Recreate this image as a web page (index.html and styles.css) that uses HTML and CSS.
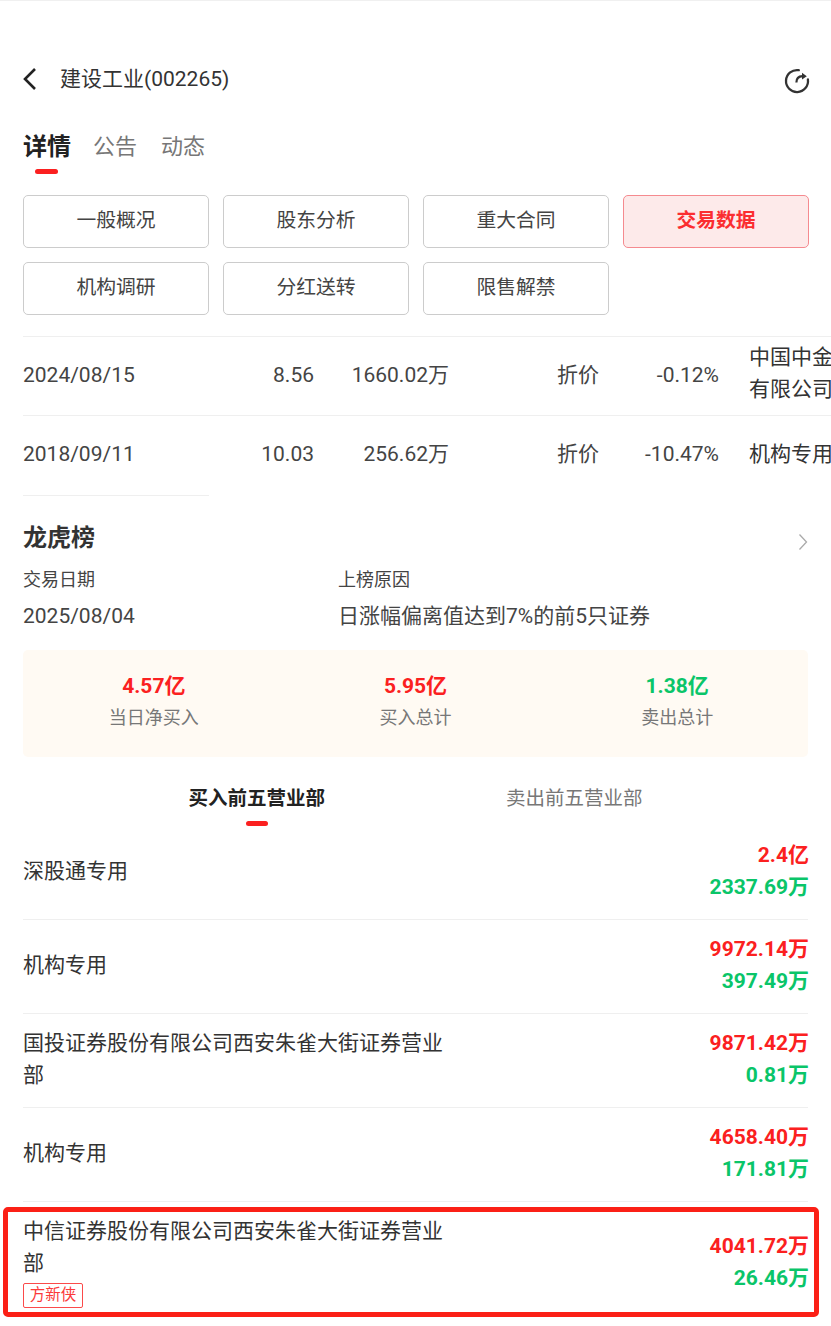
FILE: index.html
```html
<!DOCTYPE html>
<html lang="zh-CN">
<head>
    <meta charset="UTF-8">
    <meta name="viewport" content="width=device-width, initial-scale=1.0">
    <title>建设工业(002265)</title>
    <link rel="stylesheet" href="styles.css">
</head>
<body>
    <header class="nav-bar">
        <svg class="back-icon" viewBox="0 0 16 24" width="16" height="24"><path d="M13 2 L3 12 L13 22" fill="none" stroke="#222" stroke-width="2.6"/></svg>
        <div class="nav-title">建设工业(002265)</div>
        <svg class="share-icon" viewBox="0 0 26 26" width="26" height="26">
            <path d="M14.8 2.2 A11 11 0 1 0 23.9 11.5" fill="none" stroke="#333" stroke-width="2.3" stroke-linecap="round"/>
            <path d="M12.4 14.5 C12.4 10.8 14.5 8.4 18.5 8.2" fill="none" stroke="#333" stroke-width="2.2"/>
            <path d="M18 4.8 L22.8 8.2 L18 11.6 Z" fill="#333"/>
        </svg>
    </header>

    <nav class="main-tabs">
        <div class="main-tab active">详情</div>
        <div class="main-tab">公告</div>
        <div class="main-tab">动态</div>
    </nav>

    <div class="filter-grid">
        <div class="filter-btn">一般概况</div>
        <div class="filter-btn">股东分析</div>
        <div class="filter-btn">重大合同</div>
        <div class="filter-btn selected">交易数据</div>
        <div class="filter-btn">机构调研</div>
        <div class="filter-btn">分红送转</div>
        <div class="filter-btn">限售解禁</div>
    </div>

    <section class="trade-table">
        <div class="trade-row">
            <div>2024/08/15</div>
            <div class="num">8.56</div>
            <div class="num">1660.02万</div>
            <div class="num">折价</div>
            <div class="num">-0.12%</div>
            <div class="trade-name two-line">中国中金财富证券<br>有限公司北京分公司</div>
        </div>
        <div class="trade-row">
            <div>2018/09/11</div>
            <div class="num">10.03</div>
            <div class="num">256.62万</div>
            <div class="num">折价</div>
            <div class="num">-10.47%</div>
            <div class="trade-name">机构专用</div>
        </div>
        <div class="short-line"></div>
    </section>

    <section class="rank">
        <div class="rank-head">
            <h2>龙虎榜</h2>
            <svg viewBox="0 0 10 18" width="10" height="18"><path d="M1.5 1.5 L8.5 9 L1.5 16.5" fill="none" stroke="#aaa" stroke-width="1.3"/></svg>
        </div>
        <div class="rank-info">
            <div class="info-date">
                <div class="info-label">交易日期</div>
                <div class="info-value">2025/08/04</div>
            </div>
            <div>
                <div class="info-label">上榜原因</div>
                <div class="info-value">日涨幅偏离值达到7%的前5只证券</div>
            </div>
        </div>

        <div class="summary">
            <div class="summary-item">
                <div class="summary-value up">4.57亿</div>
                <div class="summary-label">当日净买入</div>
            </div>
            <div class="summary-item">
                <div class="summary-value up">5.95亿</div>
                <div class="summary-label">买入总计</div>
            </div>
            <div class="summary-item">
                <div class="summary-value down">1.38亿</div>
                <div class="summary-label">卖出总计</div>
            </div>
        </div>

        <div class="sub-tabs">
            <div class="sub-tab active">买入前五营业部</div>
            <div class="sub-tab">卖出前五营业部</div>
        </div>

        <div class="dept-list">
            <div class="dept-row">
                <div class="dept-name">深股通专用</div>
                <div class="dept-nums"><div class="up">2.4亿</div><div class="down">2337.69万</div></div>
            </div>
            <div class="dept-row">
                <div class="dept-name">机构专用</div>
                <div class="dept-nums"><div class="up">9972.14万</div><div class="down">397.49万</div></div>
            </div>
            <div class="dept-row">
                <div class="dept-name">国投证券股份有限公司西安朱雀大街证券营业部</div>
                <div class="dept-nums"><div class="up">9871.42万</div><div class="down">0.81万</div></div>
            </div>
            <div class="dept-row">
                <div class="dept-name">机构专用</div>
                <div class="dept-nums"><div class="up">4658.40万</div><div class="down">171.81万</div></div>
            </div>
            <div class="dept-row marked">
                <div class="dept-name">
                    中信证券股份有限公司西安朱雀大街证券营业部
                    <span class="trader-tag">方新侠</span>
                </div>
                <div class="dept-nums"><div class="up">4041.72万</div><div class="down">26.46万</div></div>
            </div>
        </div>
    </section>
</body>
</html>
```

FILE: styles.css
```css
html, body {
    margin: 0;
    height: 1326px;
    overflow: hidden;
}
body {
    font-family: Roboto, "Noto Sans CJK SC", sans-serif;
    background-color: #fff;
    color: #333;
    border-top: 1px solid #f0f0f0;
    box-sizing: border-box;
}
.up {
    color: #fb2020;
}
.down {
    color: #0ac569;
}

/* top bar */
.nav-bar {
    display: flex;
    align-items: center;
    height: 40px;
    margin-top: 58px;
    padding: 0 21px 0 22px;
}
.back-icon {
    margin-right: 22px;
}
.nav-title {
    flex: 1;
    font-size: 21px;
    color: #333;
    margin-top: -5px;
}
.share-icon {
    margin-top: 4px;
}

/* tabs */
.main-tabs {
    display: flex;
    gap: 24px;
    margin-top: 31px;
    padding: 0 23px;
}
.main-tab {
    position: relative;
    font-size: 22px;
    line-height: 34px;
    padding-bottom: 10px;
    color: #777;
}
.main-tab.active {
    font-size: 24px;
    font-weight: bold;
    color: #222;
    margin-right: -2px;
}
.main-tab.active::after {
    content: "";
    position: absolute;
    left: 12px;
    bottom: 0;
    width: 23px;
    height: 5px;
    border-radius: 3px;
    background-color: #fb2020;
}

/* filter buttons */
.filter-grid {
    display: grid;
    grid-template-columns: repeat(4, 186px);
    grid-auto-rows: 53px;
    gap: 14px;
    margin-top: 21px;
    padding: 0 23px;
}
.filter-btn {
    display: flex;
    align-items: center;
    justify-content: center;
    box-sizing: border-box;
    border: 1px solid #ccc;
    border-radius: 5px;
    font-size: 19.8px;
    color: #444;
    padding-bottom: 7px;
}
.filter-btn.selected {
    border-color: #f58a8f;
    background-color: #fdeaea;
    color: #fb2d30;
    font-weight: bold;
}

/* block trades */
.trade-table {
    margin-top: 21px;
    padding-left: 23px;
    overflow: hidden;
}
.trade-row {
    display: grid;
    grid-template-columns: 191px 100px 135px 150px 120px 200px;
    align-items: center;
    height: 79px;
    box-sizing: border-box;
    padding-bottom: 2px;
    border-top: 1px solid #efefef;
    font-size: 21px;
    line-height: 28px;
    color: #444;
    white-space: nowrap;
}
.num {
    text-align: right;
}
.trade-name {
    margin-left: 30px;
    line-height: 32px;
    color: #333;
}
.trade-name.two-line {
    margin-top: -4px;
}
.short-line {
    width: 186px;
    height: 1px;
    margin-top: 1px;
    background-color: #efefef;
}

/* dragon tiger list */
.rank {
    padding: 0 23px;
}
.rank-head {
    display: flex;
    align-items: center;
    justify-content: space-between;
    height: 42px;
    margin-top: 18px;
}
.rank-head h2 {
    margin: 0;
    font-size: 24px;
    color: #333;
}
.rank-head svg {
    margin: 13px 0 0 0;
}
.rank-info {
    display: flex;
    margin-top: 11px;
}
.info-date {
    width: 315px;
}
.info-label {
    font-size: 18px;
    line-height: 26px;
    color: #444;
}
.info-value {
    font-size: 21px;
    line-height: 30px;
    margin-top: 8px;
    color: #444;
}
.summary {
    display: flex;
    height: 107px;
    margin-top: 19px;
    border-radius: 5px;
    background-color: #fffaf3;
}
.summary-item {
    flex: 1;
    text-align: center;
    padding-top: 21px;
}
.summary-value {
    font-size: 21px;
    font-weight: bold;
    line-height: 30px;
}
.summary-label {
    font-size: 18px;
    line-height: 26px;
    margin-top: 4px;
    color: #777;
}

/* top five tabs */
.sub-tabs {
    display: flex;
    justify-content: center;
    gap: 181px;
    margin-top: 27px;
}
.sub-tab {
    position: relative;
    font-size: 19.5px;
    line-height: 30px;
    padding-bottom: 12px;
    color: #777;
}
.sub-tab.active {
    font-weight: bold;
    color: #222;
}
.sub-tab.active::after {
    content: "";
    position: absolute;
    left: 58px;
    bottom: 0;
    width: 22px;
    height: 5px;
    border-radius: 3px;
    background-color: #fb2020;
}
.dept-row {
    display: flex;
    align-items: center;
    justify-content: space-between;
    box-sizing: border-box;
    height: 94px;
    padding-bottom: 4px;
    border-bottom: 1px solid #efefef;
}
.dept-name {
    width: 425px;
    font-size: 21px;
    line-height: 32px;
    color: #333;
}
.dept-nums {
    font-size: 21px;
    font-weight: bold;
    line-height: 32px;
    text-align: right;
    margin-right: -1px;
}
.dept-row.marked {
    position: relative;
    height: 119px;
    padding-bottom: 0;
    border-bottom: none;
}
.dept-row.marked::after {
    content: "";
    position: absolute;
    left: -20px;
    right: -11px;
    top: 5px;
    bottom: 4px;
    border: 5px solid #fb2016;
    border-radius: 5px;
}
.trader-tag {
    display: block;
    box-sizing: border-box;
    width: 60px;
    height: 25px;
    margin-top: 4px;
    border: 1px solid #fb4a4a;
    border-radius: 2px;
    font-size: 15.5px;
    line-height: 22px;
    text-align: center;
    color: #fb3a3a;
}
```
